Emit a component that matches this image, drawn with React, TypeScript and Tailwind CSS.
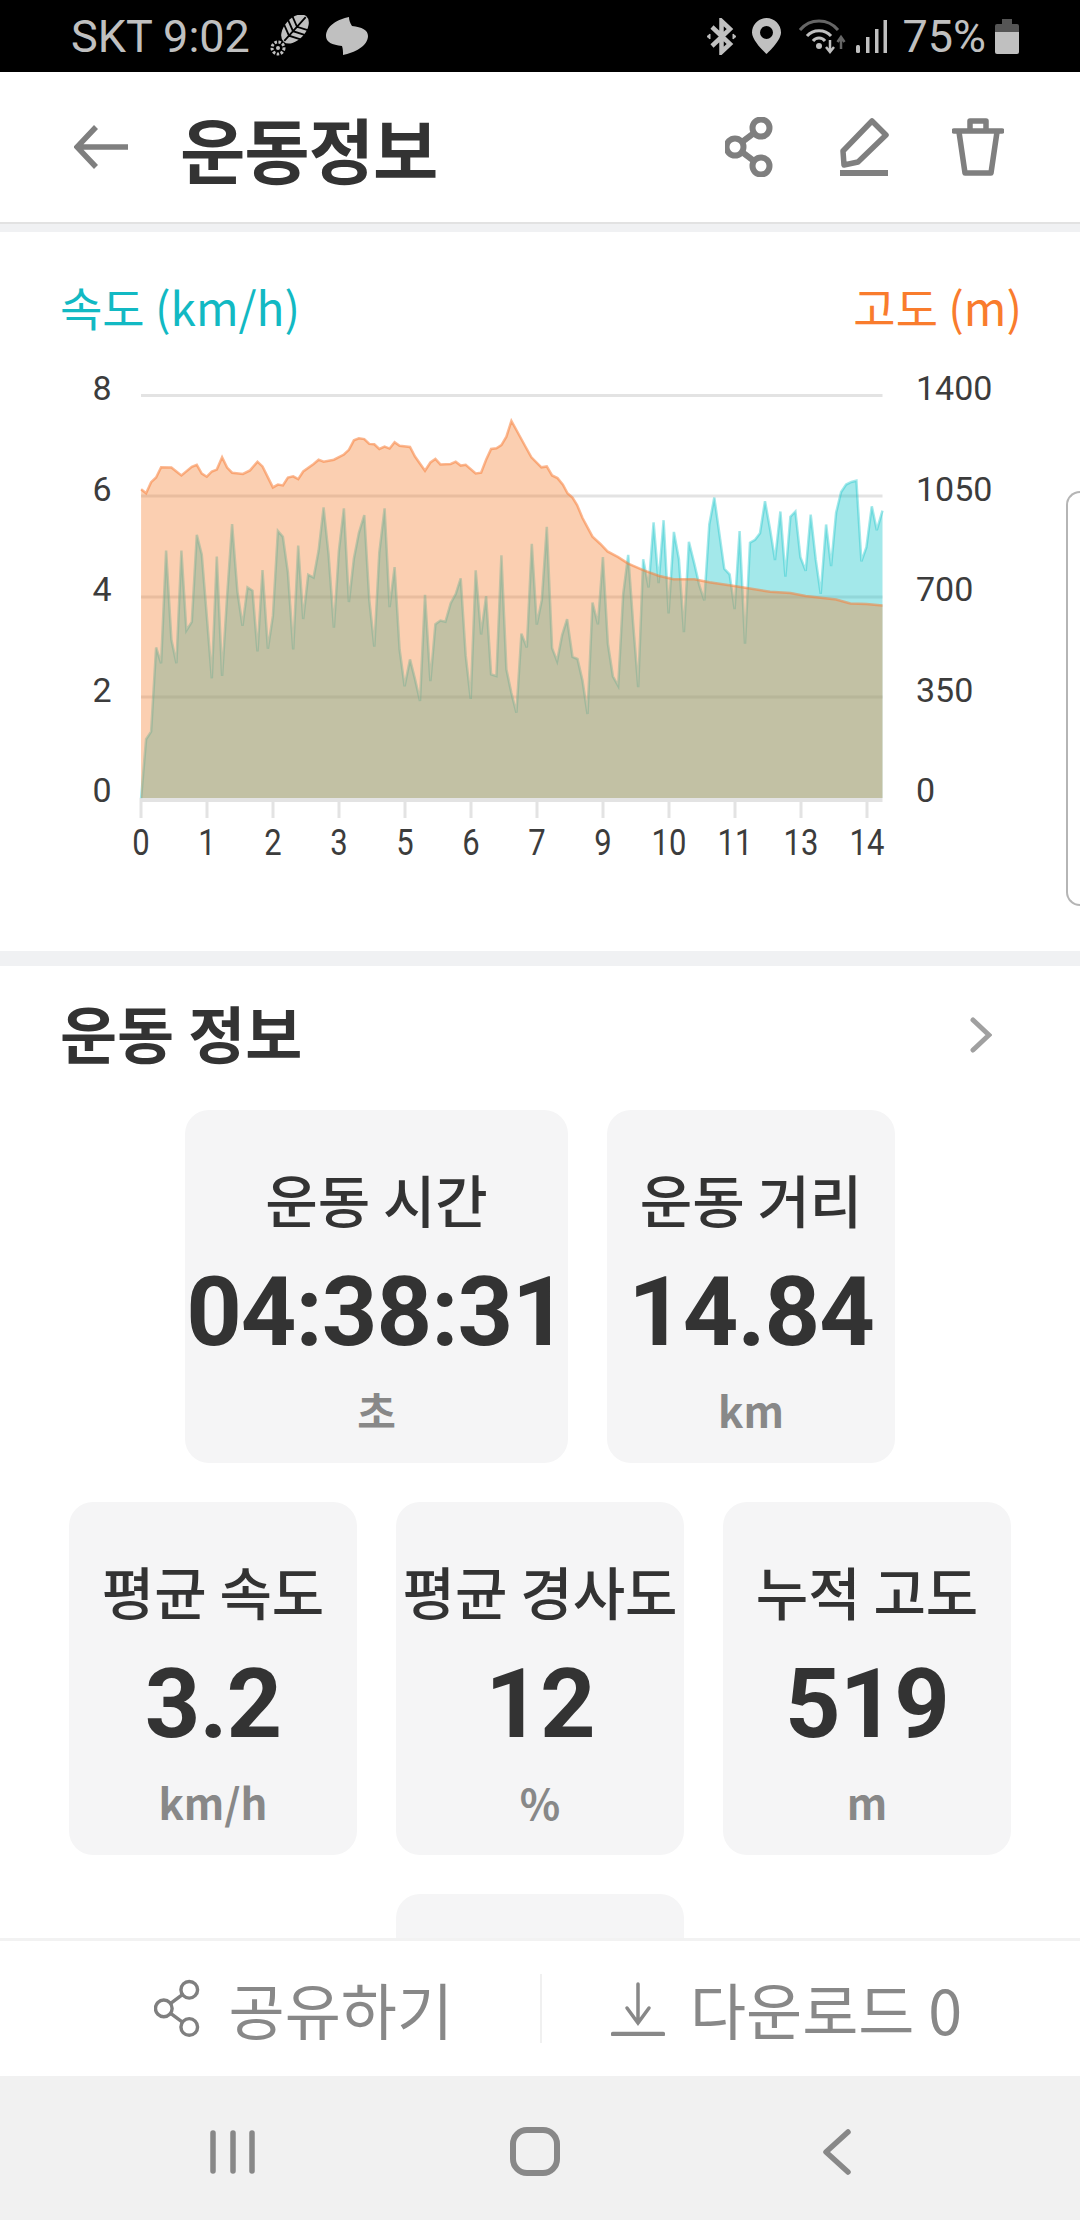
import React from "react";

type Pt = [number, number];

// Points were read off the chart, left half and right half
const speedLeft: Pt[] = [
  [395,1361],[409,1212],[423,1193],[437,980],[451,1020],[465,735],[480,960],[494,1020],[508,735],[522,937],[537,915],[551,695],[565,745],[579,900],[593,1058],[607,750],[622,1052],[636,850],[650,668],[665,840],[679,925],[693,828],[707,836],[721,990],[735,784],[750,983],[764,900],[778,685],[792,700],[806,790],[821,985],[835,722],[849,908],[863,796],[878,803],[892,735],[906,626],[920,745],[935,930],[949,735],[963,628],[977,865],[991,755],[1005,690],[1020,645],[1034,860],[1048,978],[1062,740],[1077,628],[1091,878],[1105,777],[1119,985],[1133,1078],[1148,1010],[1162,1060],[1176,1115],[1190,847],[1205,1065],[1219,921],[1233,912],[1247,915],[1262,868],[1276,845],[1290,805],[1304,1000],[1318,1110],[1332,785],[1347,947],[1361,850],[1375,1048],[1390,1052],[1404,747],[1418,1035],[1432,1095],[1446,1145],[1460,945],[1475,980],[1489,718],[1503,922],[1517,860],[1531,675],
];
const speedRight: Pt[] = [
  [90,895],[104,925],[118,865],[132,828],[147,915],[161,920],[175,970],[189,1047],[203,790],[218,840],[232,685],[246,885],[260,960],[275,982],[289,770],[303,680],[317,840],[331,985],[345,690],[360,755],[374,605],[388,745],[402,600],[416,815],[431,627],[445,690],[459,858],[473,650],[488,700],[502,750],[516,785],[530,610],[544,548],[558,630],[572,712],[587,725],[601,805],[615,625],[630,885],[644,652],[658,645],[672,630],[686,556],[700,620],[714,692],[729,580],[743,730],[757,592],[771,580],[785,685],[800,717],[814,587],[828,690],[842,770],[857,610],[871,706],[885,583],[899,535],[913,518],[928,512],[942,509],[956,695],[970,662],[985,568],[999,623],[1015,578],
];
const altLeft: Pt[] = [
  [395,580],[409,590],[423,562],[437,550],[451,524],[480,525],[508,545],[537,523],[551,518],[565,540],[579,548],[593,535],[607,530],[622,499],[636,525],[650,538],[680,541],[700,532],[721,510],[735,522],[764,575],[778,568],[792,570],[806,550],[821,547],[835,554],[849,535],[878,516],[892,505],[906,510],[935,505],[963,492],[977,480],[991,456],[1005,451],[1020,453],[1034,465],[1048,466],[1062,478],[1077,472],[1091,477],[1105,461],[1119,470],[1148,473],[1162,497],[1190,533],[1205,512],[1219,503],[1233,517],[1262,516],[1276,510],[1290,520],[1304,518],[1332,540],[1347,538],[1361,505],[1375,478],[1390,476],[1404,468],[1418,447],[1432,407],[1446,430],
];
const altRight: Pt[] = [
  [15,430],[32,455],[60,478],[75,476],[90,497],[105,503],[120,518],[133,538],[147,548],[160,565],[175,595],[203,638],[225,655],[245,672],[275,685],[303,700],[345,715],[388,728],[430,736],[488,736],[530,743],[600,752],[700,765],[757,768],[800,775],[885,783],[925,792],[970,793],[1015,797],
];

const TOP = 360;
const fromLeft = ([x, y]: Pt): Pt => [x / 2.8, 260 + y / 2.529 - TOP];
const fromRight = ([x, y]: Pt): Pt => [520 + x / 2.8, 260 + y / 2.306 - TOP];
const toLine = (pts: Pt[]) => pts.map(([x, y]) => `${x.toFixed(1)},${y.toFixed(1)}`).join(" ");

const speed = [...speedLeft.map(fromLeft), ...speedRight.map(fromRight)];
const alt = [...altLeft.map(fromLeft), ...altRight.map(fromRight)];

const AXIS_Y = 798 - TOP;
const areaOf = (pts: Pt[]) => `141,${AXIS_Y} ${toLine(pts)} 882.5,${AXIS_Y}`;

const gridYs = [395.6, 496, 597, 697].map((y) => y - TOP);
const xLabels = ["0", "1", "2", "3", "5", "6", "7", "9", "10", "11", "13", "14"];
const leftLabels = ["8", "6", "4", "2", "0"];
const rightLabels = ["1400", "1050", "700", "350", "0"];
const labelYs = [400, 501, 601, 702, 802].map((y) => y - TOP);

const Chart = () => (
  <svg width="1080" height="590" viewBox="0 0 1080 590" className="block">
    {gridYs.map((y) => (
      <line key={y} x1="141" x2="882.5" y1={y} y2={y} stroke="#e3e3e3" strokeWidth="3" />
    ))}
    {xLabels.map((_, i) => (
      <line key={i} x1={141 + i * 66} x2={141 + i * 66} y1={AXIS_Y + 4} y2={AXIS_Y + 20} stroke="#e3e3e3" strokeWidth="3" />
    ))}
    <line x1="139.5" x2="882.5" y1={AXIS_Y + 2} y2={AXIS_Y + 2} stroke="#e3e3e3" strokeWidth="4" />
    <polygon points={areaOf(speed)} fill="#19c6cb" fillOpacity="0.4" />
    <polyline points={toLine(speed)} fill="none" stroke="#19c6cb" strokeOpacity="0.4" strokeWidth="2.5" />
    <polygon points={areaOf(alt)} fill="#f58232" fillOpacity="0.38" />
    <polyline points={toLine(alt)} fill="none" stroke="#f7803a" strokeOpacity="0.55" strokeWidth="2.5" />
    <g fontFamily="Roboto, sans-serif" fontSize="34" fill="#3c3c3c">
      {leftLabels.map((t, i) => (
        <text key={t} x="102" y={labelYs[i]} textAnchor="middle">{t}</text>
      ))}
      {rightLabels.map((t, i) => (
        <text key={t} x="916" y={labelYs[i]}>{t}</text>
      ))}
      {xLabels.map((t, i) => (
        <text key={t} fontSize="36.500" transform={`translate(${141 + i * 66} ${855 - TOP}) scale(0.85 1)`} textAnchor="middle">{t}</text>
      ))}
    </g>
  </svg>
);

const StatCard = ({ label, value, unit, wide }: { label: string; value: string; unit: string; wide?: boolean }) => (
  <div className={`${wide ? "w-[383px]" : "w-[288px]"} h-[353px] rounded-[24px] bg-[#f5f5f6] flex flex-col items-center pt-[53px]`}>
    <div className="text-[57px] leading-[70px] font-medium text-[#333] whitespace-nowrap">{label}</div>
    <div className="mt-[24px] text-[97px] leading-[110px] font-bold text-[#333] tracking-[-1px] font-['Roboto'] whitespace-nowrap">{value}</div>
    <div className="mt-[13px] text-[42px] leading-[60px] font-bold text-[#888] whitespace-nowrap">{unit}</div>
  </div>
);

const ShareIcon = ({ size, sw }: { size: number; sw: number }) => (
  <svg width={size} height={size * 1.25} viewBox="0 0 48 60" fill="none" stroke="#7f7f7f" strokeWidth={sw}>
    <circle cx="36" cy="11" r="8.5" />
    <circle cx="10" cy="30" r="8.5" />
    <circle cx="36" cy="49" r="8.5" />
    <path d="M17 25 29 16M17 35 29 44" />
  </svg>
);

const StatusIcons = () => (
  <div className="flex items-center">
    <svg width="31" height="37" viewBox="0 0 31 37" fill="none" stroke="#c0c0c0" strokeWidth="4.500" className="mt-[1px]">
      <path d="M6 9 24 26 15.5 34V3L24 11 6 28" />
      <path d="M1 18.5 4 16v5zM30 18.5 27 16v5z" fill="#c0c0c0" strokeWidth="1" />
    </svg>
    <svg width="29" height="36" viewBox="0 0 29 36" className="ml-[15px]">
      <path fill="#c0c0c0" fillRule="evenodd" d="M14.5 0C6.5 0 0 6.500 0 14.500 0 23 14.500 36 14.500 36S29 23 29 14.500C29 6.500 22.500 0 14.500 0zm0 8a6.500 6.500 0 1 1 0 13 6.500 6.500 0 0 1 0-13z" />
    </svg>
    <svg width="47" height="36" viewBox="0 0 47 36" fill="none" className="ml-[18px]">
      <path d="M1 12C11 0 29 0 39 12" stroke="#666" strokeWidth="3" />
      <path d="M8 18C14 11 26 11 32 18" stroke="#c0c0c0" strokeWidth="3" />
      <path d="M14 23C17 19 23 19 26 23" stroke="#c0c0c0" strokeWidth="3" />
      <circle cx="20" cy="28" r="3" fill="#c0c0c0" />
      <path d="M31 22V33M27 29 31 34 35 29" stroke="#c0c0c0" strokeWidth="2.500" />
      <path d="M42 31V20M38.500 24 42 19 45.500 24" stroke="#666" strokeWidth="2.500" />
    </svg>
    <svg width="31" height="33" viewBox="0 0 31 33" fill="#c0c0c0" className="ml-[10px]">
      <rect x="0" y="25" width="4" height="8" rx="1.500" />
      <rect x="10" y="17" width="3.500" height="16" />
      <rect x="19" y="9" width="3.500" height="24" />
      <rect x="27.500" y="0" width="3.500" height="33" />
    </svg>
    <span className="ml-[15px] text-[45px] leading-none text-[#c0c0c0] font-['Roboto']">75%</span>
    <svg width="24" height="35" viewBox="0 0 24 35" className="ml-[9px]">
      <path d="M7 0h10v5h5a2 2 0 0 1 2 2v6H0V7a2 2 0 0 1 2-2h5z" fill="#555" />
      <path d="M0 13h24v20a2 2 0 0 1-2 2H2a2 2 0 0 1-2-2z" fill="#c0c0c0" />
    </svg>
  </div>
);

const App = () => {
  return (
    <div className="relative w-[1080px] h-[2220px] flex flex-col overflow-hidden bg-white font-['Noto_Sans_CJK_KR','Roboto',sans-serif]">
      {/* status bar */}
      <div className="h-[72px] shrink-0 bg-black flex items-center justify-between pl-[71px] pr-[61px]">
        <div className="flex items-center">
          <span className="text-[45px] leading-none text-[#c0c0c0] font-['Roboto']">SKT 9:02</span>
          <svg width="42" height="42" viewBox="0 0 42 42" className="ml-[19px]">
            <g transform="rotate(42 26 14)">
              <ellipse cx="26" cy="14" rx="10.500" ry="17" fill="#c0c0c0" />
              <path d="M15 6 26 11 37 6M15 12 26 17 37 12M15 18 26 23 37 18M26 -2V30" stroke="#000" strokeWidth="1.800" fill="none" />
            </g>
            <circle cx="9" cy="33" r="6" fill="none" stroke="#c0c0c0" strokeWidth="3" strokeDasharray="2.500 1.500" />
            <circle cx="9" cy="33" r="2" fill="#c0c0c0" />
          </svg>
          <svg width="42" height="38" viewBox="0 0 42 38" className="ml-[15px]">
            <path fill="#c0c0c0" d="M23 0C12 2 0 9 0 19c0 6 6 9 16 10c1 3 1 6 1 9c11-2 25-9 25-19c0-6-6-9-16-10c-2-3-3-6-3-9z" />
          </svg>
        </div>
        <StatusIcons />
      </div>

      {/* header */}
      <div className="h-[152px] shrink-0 flex items-center border-b-2 border-[#e2e2e2] pl-[74px] pr-[76px]">
        <svg width="54" height="44" viewBox="0 0 54 44" fill="none" stroke="#7f7f7f" strokeWidth="5.500">
          <path d="M54 22H4M22 2 3 22 22 42" />
        </svg>
        <h1 className="ml-[52px] text-[71px] leading-none font-bold text-[#333] tracking-[-1px]">운동정보</h1>
        <div className="ml-auto flex items-center">
          <ShareIcon size={48} sw={6} />
          <svg width="50" height="58" viewBox="0 0 50 58" fill="none" stroke="#7f7f7f" strokeWidth="5.500" className="ml-[66px]">
            <path d="M33 3 47 17 19 44 5 47 4 33z" strokeLinejoin="round" />
            <path d="M1 55H49" strokeWidth="6" />
          </svg>
          <svg width="52" height="58" viewBox="0 0 52 58" fill="none" stroke="#7f7f7f" strokeWidth="5.500" strokeLinejoin="round" className="ml-[63px]">
            <path d="M2 13H50" strokeLinecap="round" />
            <path d="M18 12V3H34V12" />
            <path d="M7 14 13 55H39L45 14" />
          </svg>
        </div>
      </div>

      <div className="flex-1 min-h-0 overflow-hidden bg-[#f0f1f3] pt-[8px]">
        {/* chart */}
        <section className="h-[719px] bg-white">
          <div className="flex justify-between pl-[60px] pr-[58px] pt-[44px] h-[128px] text-[46px] leading-[60px]">
            <span className="text-[#12b9c3]">속도 (km/h)</span>
            <span className="text-[#f97c2d]">고도 (m)</span>
          </div>
          <Chart />
        </section>

        {/* exercise info */}
        <section className="mt-[15px] bg-white pt-[26px] h-[1000px]">
          <div className="flex items-center justify-between pl-[60px] pr-[88px] h-[80px]">
            <h2 className="text-[62px] leading-none font-bold text-[#333]">운동 정보</h2>
            <svg width="22" height="36" viewBox="0 0 22 36" fill="none" stroke="#a0a0a0" strokeWidth="5" strokeLinecap="round" className="mt-[6px]">
              <path d="M3 3 19 18 3 33" />
            </svg>
          </div>
          <div className="mx-auto mt-[38px] w-[960px] flex flex-wrap justify-center gap-[39px]">
            <StatCard wide label="운동 시간" value="04:38:31" unit="초" />
            <StatCard label="운동 거리" value="14.84" unit="km" />
            <StatCard label="평균 속도" value="3.2" unit="km/h" />
            <StatCard label="평균 경사도" value="12" unit="%" />
            <StatCard label="누적 고도" value="519" unit="m" />
            <div className="w-[288px] h-[353px] rounded-[24px] bg-[#f5f5f6]" />
          </div>
        </section>
      </div>

      {/* share / download bar */}
      <div className="h-[138px] shrink-0 bg-white border-t-[3px] border-[#f2f2f2] flex items-center text-[#888]">
        <div className="w-[540px] flex items-center justify-end pr-[87px]">
          <ShareIcon size={47} sw={3.5} />
          <span className="ml-[28px] text-[61px] leading-none">공유하기</span>
        </div>
        <div className="w-[2px] h-[69px] bg-[#f0f0f0]" />
        <div className="flex-1 flex items-center pl-[69px]">
          <svg width="54" height="54" viewBox="0 0 54 54" fill="none" stroke="#888" strokeWidth="3.500" strokeLinecap="round">
            <path d="M27 2V41M16 26 27 41 38 26" />
            <path d="M2 52H52" strokeWidth="4.500" />
          </svg>
          <span className="ml-[25px] text-[61px] leading-none">다운로드 0</span>
        </div>
      </div>

      {/* system nav */}
      <div className="h-[144px] shrink-0 bg-[#f1f1f1] flex items-center">
        <svg width="1080" height="144" viewBox="0 0 1080 144" fill="none" stroke="#888" strokeLinecap="round" className="block">
          <path d="M213 57V95M233 57V95M252 57V95" strokeWidth="5.500" />
          <rect x="513" y="54" width="44" height="43" rx="14" strokeWidth="6" />
          <path d="M848 56 826 76 848 96" strokeWidth="5.500" strokeLinejoin="round" />
        </svg>
      </div>

      {/* edge panel handle */}
      <div className="absolute right-0 top-[491px] w-[14px] h-[415px] rounded-l-[14px] border-2 border-r-0 border-[#b5b5b5] bg-white" />
    </div>
  );
};

export default App;
